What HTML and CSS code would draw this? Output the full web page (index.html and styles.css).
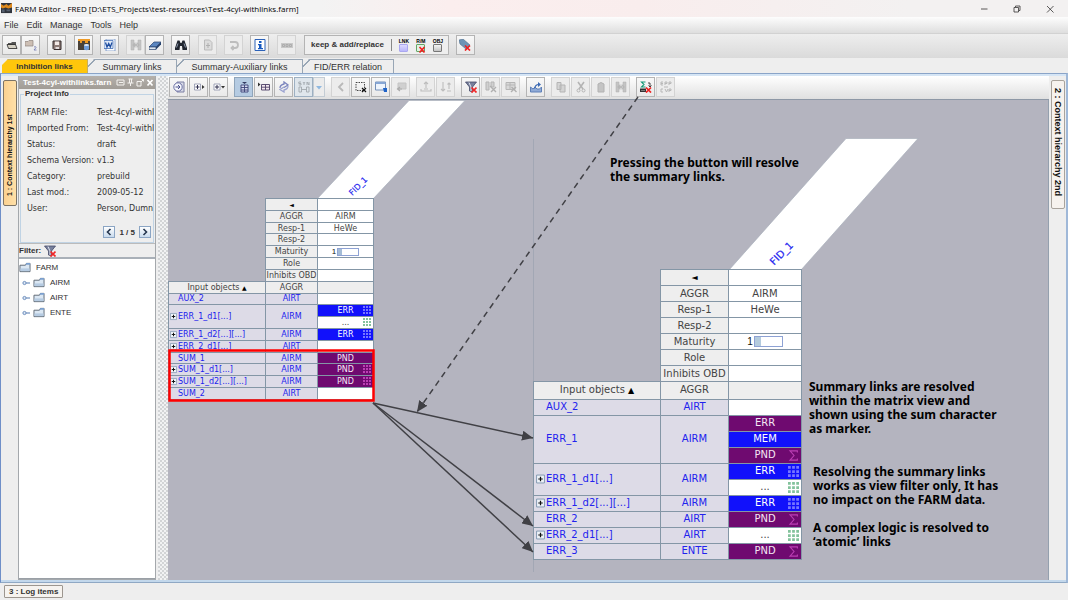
FILE: index.html
```html
<!DOCTYPE html>
<html lang="en">
<head>
<meta charset="utf-8">
<title>FARM Editor - FRED</title>
<link rel="stylesheet" href="styles.css">
</head>
<body>
<svg class="defs" aria-hidden="true">
  <symbol id="i-open" viewBox="0 0 12 12"><path d="M2 4h3l1-1h4v6H2z" fill="#555"/><path d="M3 6h7l-1 3H2z" fill="#e8e4d8"/><path d="M1 5.5h8.500l1.500 4H2.500z" fill="#d6d2c6" stroke="#222" stroke-width=".8"/></symbol>
  <symbol id="i-open2" viewBox="0 0 12 12"><path d="M0 2.500h3l1-1h4V7H0z" fill="#cdbfb4" stroke="#8f8580" stroke-width=".7"/><path d="M9 8q2-1 2 .6L9 11h2.500" fill="none" stroke="#6c74b0" stroke-width=".8"/></symbol>
  <symbol id="i-save" viewBox="0 0 12 12"><path d="M2 2h8v8.500H3L2 9.500z" fill="#8d7b76" stroke="#352c2c"/><path d="M4 2.500h4V6H4z" fill="#f2e9e6"/><path d="M4.500 8h3.500v2H4.500z" fill="#e3dcdc"/></symbol>
  <symbol id="i-farm" viewBox="0 0 12 12"><path d="M0 0h12v11H0z" fill="#30343c"/><path d="M0 1l3 2 3-2 2 2 4-3v5l-4 1-3-1-3 1-2-1z" fill="#e08a1c"/><path d="M1 7h3v3H1zM6 7h4v2H6z" fill="#566070"/></symbol>
  <symbol id="i-db" viewBox="0 0 12 12"><path d="M0 0h12v6H0z" fill="#ee9a25"/><path d="M0 2h2v2h2V2h3v2h3V2h2v9H0z" fill="#4a4238"/><path d="M6 6h5v4.500q-2.500 1.500-5 0z" fill="#6f9cd8"/><ellipse cx="8.500" cy="6" rx="2.500" ry="1" fill="#dce9fa"/></symbol>
  <symbol id="i-word" viewBox="0 0 12 12"><path d="M2 0h9v12H2z" fill="#fff" stroke="#6f8fc4" stroke-width=".8"/><path d="M0 1.500h9v8H0z" fill="#dfe9f8" stroke="#2f5fae" stroke-width=".7"/><path d="M1.500 3.500L3 8l1.700-3.500L6.300 8 8 3.500" fill="none" stroke="#1f4ea0" stroke-width="1.300"/></symbol>
  <symbol id="i-merge" viewBox="0 0 12 12"><path d="M1 1h3v10H1zM8 1h3v10H8zM3 5h6v2H3zM5 3.500v5L3.500 6zM7 3.500v5L8.500 6z" fill="#c4c4c4" stroke="#b2b2b2" stroke-width=".5"/></symbol>
  <symbol id="i-eraser" viewBox="0 0 12 12"><path d="M0 8l5-5h7L7 8z" fill="#5b86c0" stroke="#27416b" stroke-width=".7"/><path d="M0 8h7v2.500H0z" fill="#dfe8f2" stroke="#27416b" stroke-width=".7"/><path d="M7 8l5-5v2.500l-5 5z" fill="#26426e"/></symbol>
  <symbol id="i-find" viewBox="0 0 12 12"><path d="M2.500 1.500h2L5.500 4h1l1-2.500h2L12 9v2H7.500L7 7H5l-.5 4H0V9z" fill="#20252f"/><path d="M1.500 8.500l1.500-4M9 4.500l1.500 4" stroke="#aab6cc" stroke-width=".8"/></symbol>
  <symbol id="i-doc" viewBox="0 0 12 12"><path d="M2.500 1h5l2.500 2.500V11H2.500z" fill="#dcdcdc" stroke="#bbb"/><path d="M6 4v5M4 6.500h4" stroke="#b0b0b0"/></symbol>
  <symbol id="i-redo" viewBox="0 0 12 12"><path d="M2 3h5q3 0 3 3t-3 3H5M5.500 7L3.500 9l2 2" fill="none" stroke="#bdbdbd" stroke-width="1.800"/></symbol>
  <symbol id="i-info" viewBox="0 0 12 12"><path d="M1 .5h10v11H1z" fill="#fff" stroke="#2c62b8"/><path d="M5 2h2.500v2H5zM4 5h3.500v4H9v1.300H4V9h1V6.300H4z" fill="#1558c0"/></symbol>
  <symbol id="i-obd" viewBox="0 0 12 12"><path d="M0 4h12v5H0z" fill="#c8c8c8"/><path d="M1.500 5.500h2v2h-2zM5 5.500h2v2H5zM8.500 5.500h2v2h-2z" fill="none" stroke="#a6a6a6" stroke-width=".8"/></symbol>
  <symbol id="i-tagx" viewBox="0 0 12 12"><path d="M0 1l4-1 7 6-4 4L1 5z" fill="#6d93b5" stroke="#4d6d8c" stroke-width=".6"/><path d="M6 6.500l5 5M11 6.500l-5 5" stroke="#f02020" stroke-width="1.700"/></symbol>
  <symbol id="i-hist" viewBox="0 0 12 12"><path d="M4 1h7v10H4z" fill="#d7dae6" stroke="#7d80a4"/><circle cx="5" cy="6" r="4.200" fill="#f6f7fc" stroke="#6a6fa4"/><path d="M2.500 6h4.500M5 4l2 2-2 2" fill="none" stroke="#4a508c"/></symbol>
  <symbol id="i-plusr" viewBox="0 0 12 12"><path d="M1.500 3h6v6h-6z" fill="#fff" stroke="#8b90a8" stroke-width=".8"/><path d="M4.500 4v4M2.500 6h4" stroke="#303050"/><path d="M9 4l2.500 2L9 8z" fill="#333"/></symbol>
  <symbol id="i-plusd" viewBox="0 0 12 12"><path d="M1 3h6v6H1z" fill="#fff" stroke="#8b90a8" stroke-width=".8"/><path d="M4 4v4M2 6h4" stroke="#303050"/><path d="M8 5h4l-2 2.500z" fill="#333"/></symbol>
  <symbol id="i-cols" viewBox="0 0 12 12"><path d="M3 4h7v7H3zM3 6.500h7M3 9h7M6.500 4v7" fill="#d4d8ee" stroke="#3c4476" stroke-width=".9"/><path d="M4 1h5L6.500 3z" fill="#333a60"/></symbol>
  <symbol id="i-rows" viewBox="0 0 12 12"><path d="M3.500 3.500h8v5.500h-8zM3.500 6.200h8M7.500 3.500V9" fill="#f4e9f0" stroke="#4c3f66" stroke-width=".9"/><path d="M0 1.500l2.500 2L0 5.500z" fill="#333"/></symbol>
  <symbol id="i-sync" viewBox="0 0 12 12"><path d="M2 7q0-3 4-4V1l4 3-4 2.500" fill="none" stroke="#7b84bd" stroke-width="1.300"/><path d="M10 5q0 3-4 4v2L2 8.500 6 6" fill="none" stroke="#9aa2d0" stroke-width="1.300"/></symbol>
  <symbol id="i-syn" viewBox="0 0 12 12"><path d="M3 1H.8v1.500H3V4H.8M5 1l1 1.500L7 1M6 2.500V4M9 4V1l2 3V1M1 6h2.500v5H1zM8.500 6H11v5H8.500zM3.500 8.500h5" fill="none" stroke="#a2a8ae" stroke-width=".9"/></symbol>
  <symbol id="i-left" viewBox="0 0 12 12"><path d="M8 2L4 6l4 4" fill="none" stroke="#b8b8b8" stroke-width="1.800"/></symbol>
  <symbol id="i-selx" viewBox="0 0 12 12"><path d="M1 1.500h8.500v8H1z" fill="none" stroke="#333" stroke-width=".9" stroke-dasharray="1.500 1"/><path d="M7 7l4 4M11 7l-4 4" stroke="#111" stroke-width="1.200"/></symbol>
  <symbol id="i-win" viewBox="0 0 12 12"><path d="M.5 1h10v8H.5z" fill="#eef4fc" stroke="#7590b8"/><path d="M.5 1h10v2H.5z" fill="#87a6d4"/><path d="M8 7h4v4H9z" fill="#1f63c8"/></symbol>
  <symbol id="i-back" viewBox="0 0 12 12"><path d="M3 2h8v6H3z" fill="#d0d0d0" stroke="#c4c4c4"/><path d="M7 8H3M5 6L2.500 8 5 10" fill="none" stroke="#ababab" stroke-width="1.200"/></symbol>
  <symbol id="i-anchor" viewBox="0 0 12 12"><path d="M6 1v6M4 3l2-2 2 2M1 8v2h10V8M4 8h4" fill="none" stroke="#bdbdbd" stroke-width="1.100"/></symbol>
  <symbol id="i-swap" viewBox="0 0 12 12"><path d="M3 1v9M1 8l2 2 2-2M7 10h4M9 8V2M7.500 3.500L9 2l1.500 1.500" fill="none" stroke="#bdbdbd" stroke-width="1.100"/></symbol>
  <symbol id="i-funnelx" viewBox="0 0 12 12"><path d="M.5 1h11L7.500 6v5l-3-1V6z" fill="#77809c" stroke="#454a68" stroke-width=".8"/><path d="M4 1.500L6 6v4" stroke="#dfe3ee" fill="none"/><path d="M6.500 6.500l5 5M11.500 6.500l-5 5" stroke="#f02828" stroke-width="1.700"/></symbol>
  <symbol id="i-mergex" viewBox="0 0 12 12"><path d="M1 1h3v8H1zM6 1h3v5H6z" fill="#d0d0d0" stroke="#b4b4b4"/><path d="M5 5l6 6M11 6l-5 5" stroke="#b0b0b0" stroke-width="1.400"/></symbol>
  <symbol id="i-tabx" viewBox="0 0 12 12"><path d="M1 1.500h9v7H1zM1 4h9M5 1.500v7" fill="#d8d8d8" stroke="#b6b6b6"/><path d="M6.500 6l5 5M11 6l-5 5" stroke="#b0b0b0" stroke-width="1.400"/></symbol>
  <symbol id="i-export" viewBox="0 0 12 12"><path d="M.5 6v5h11V6l-2 2H7L5 6 3 8z" fill="#8faad6" stroke="#5f80b8"/><path d="M4.500 7.500q1-4 4-4" fill="none" stroke="#3b69b4" stroke-width="1.200"/><path d="M8 1l3 2.500L8 6z" fill="#3b69b4"/></symbol>
  <symbol id="i-copy" viewBox="0 0 12 12"><path d="M2 1.500h4v7H2zM5 4h5v7H5z" fill="#d4d4d4" stroke="#b4b4b4"/></symbol>
  <symbol id="i-cut" viewBox="0 0 12 12"><path d="M3 1l5 7M9 1L4 8" stroke="#b4b4b4" stroke-width="1.600"/><circle cx="3.500" cy="9.500" r="1.500" fill="none" stroke="#b4b4b4"/><circle cx="8.500" cy="9.500" r="1.500" fill="none" stroke="#b4b4b4"/></symbol>
  <symbol id="i-paste" viewBox="0 0 12 12"><path d="M3 3q3-3 6 0v8H3z" fill="#c4c4c4" stroke="#b2b2b2"/></symbol>
  <symbol id="i-resolve" viewBox="0 0 12 12"><path d="M5.500 1H1.500L4 3.500 1.500 6h4" fill="none" stroke="#159a78" stroke-width="1.100"/><path d="M8 2h2v4M8.500 4.500L10 6l1.500-1.500" fill="none" stroke="#333" stroke-width=".9"/><path d="M0 7.500h6V11H0z" fill="#333"/><path d="M1 9.500h4" stroke="#aaa" stroke-width=".6"/><path d="M6 6.500l5 5M11 6.500l-5 5" stroke="#f02020" stroke-width="1.700"/></symbol>
  <symbol id="i-errerr" viewBox="0 0 12 12"><path d="M3 1H1v3h2M1 2.500h2M5 4V1h2v1.500H5M9 4V1h2v1.500H9M4 6h4M3 8H1v3h2M5 8l1.500 3L8 8M9 11V8h2v1.500H9" fill="none" stroke="#b8b8b8" stroke-width="1"/></symbol>
  <symbol id="i-folder" viewBox="0 0 12 12"><path d="M.5 3.500h6l1-2h4v9H.5z" fill="#dbe7f3" stroke="#59636e"/><path d="M7.500 1h4v2h-5z" fill="#7ba0cf"/><path d="M1 7h10v3H1z" fill="#b6cbe2"/></symbol>
  <symbol id="i-knob" viewBox="0 0 8 8"><circle cx="2.500" cy="4" r="1.600" fill="#dbe6f4" stroke="#6f8fbd"/><path d="M4 4h4" stroke="#6f8fbd" stroke-width="1.200"/></symbol>
  <symbol id="i-grid" viewBox="0 0 8 8"><path d="M0 0h2v2H0zM3 0h2v2H3zM6 0h2v2H6zM0 3h2v2H0zM3 3h2v2H3zM6 3h2v2H6zM0 6h2v2H0zM3 6h2v2H3zM6 6h2v2H6z" fill="currentColor"/></symbol>
  <symbol id="i-sum" viewBox="0 0 10 10"><path d="M8.500 2.200V.8H1.800L5.500 5 1.800 9.200h6.700V7.800" fill="none" stroke="currentColor" stroke-width="1"/></symbol>
  <symbol id="i-plus" viewBox="0 0 8 8"><path d="M.5.500h7v7h-7z" fill="#eef3f8" stroke="#7c93ad" stroke-width=".8"/><path d="M4 2v4M2 4h4" stroke="#111" stroke-width="1.100"/></symbol>
</svg>
<div class="app">
  <header class="titlebar">
    <svg class="logo"><use href="#i-farm"/></svg>
    <h1 class="title">FARM Editor - FRED [D:\ETS_Projects\test-resources\Test-4cyl-withlinks.farm]</h1>
    <button class="win" aria-label="Minimize"><svg viewBox="0 0 8 8"><path d="M1 4h6.500" stroke="#333" stroke-width=".8"/></svg></button>
    <button class="win" aria-label="Restore"><svg viewBox="0 0 8 8"><path d="M1 2.500h4.500V7H1zM2.500 2V1H7v4.500H6" fill="none" stroke="#333" stroke-width=".8"/></svg></button>
    <button class="win" aria-label="Close"><svg viewBox="0 0 8 8"><path d="M1 1l6.500 6.500M7.500 1L1 7.500" stroke="#333" stroke-width=".8"/></svg></button>
  </header>
  <nav class="menubar">
    <button>File</button><button>Edit</button><button>Manage</button><button>Tools</button><button>Help</button>
  </nav>
  <div class="toolbar">
    <div class="section">
      <div class="pair"><button class="tool" aria-label="Open"><svg><use href="#i-open"/></svg></button><button class="tool" aria-label="Open second"><svg><use href="#i-open2"/></svg></button></div>
      <button class="tool" aria-label="Save"><svg><use href="#i-save"/></svg></button>
    </div>
    <div class="section">
      <button class="tool" aria-label="Database"><svg><use href="#i-db"/></svg></button>
      <button class="tool" aria-label="Word export"><svg><use href="#i-word"/></svg></button>
      <div class="pair"><button class="tool off" aria-label="Compare"><svg><use href="#i-merge"/></svg></button><button class="tool" aria-label="Erase"><svg><use href="#i-eraser"/></svg></button></div>
      <button class="tool" aria-label="Find"><svg><use href="#i-find"/></svg></button>
    </div>
    <div class="section">
      <button class="tool off" aria-label="New page"><svg><use href="#i-doc"/></svg></button>
      <button class="tool off" aria-label="Redo"><svg><use href="#i-redo"/></svg></button>
      <button class="tool" aria-label="Info"><svg><use href="#i-info"/></svg></button>
    </div>
    <div class="section"><button class="tool off" aria-label="OBD"><svg><use href="#i-obd"/></svg></button></div>
    <div class="section">
      <div class="keep">
        <button class="keep-label">keep &amp; add/replace</button>
        <button class="mode" aria-label="Link mode"><span class="mode-text">LNK</span><span class="box lnk"></span></button>
        <button class="mode" aria-label="R/M mode"><span class="mode-text">R/M</span><span class="box rm"><svg viewBox="0 0 8 8"><path d="M2.500 2l5 5.500M7.500 2l-5 5.500" stroke="#f02020" stroke-width="1.600"/></svg></span></button>
        <button class="mode" aria-label="Object mode"><span class="mode-text">OBJ</span><span class="box obj"></span></button>
      </div>
      <button class="tool" aria-label="Remove tag"><svg><use href="#i-tagx"/></svg></button>
    </div>
  </div>
  <nav class="tabs">
    <button class="tab t1 active">Inhibition links</button><button class="tab t2">Summary links</button><button class="tab t3">Summary-Auxiliary links</button><button class="tab t4">FID/ERR relation</button>
  </nav>
  <main class="work">
    <aside class="rail left"><button class="dock up">1 : Context hierarchy 1st</button></aside>
    <section class="panel">
      <div class="panel-head">
        <h2>Test-4cyl-withlinks.farn</h2>
        <svg class="panel-icons" viewBox="0 0 38 9"><path d="M1 2h7v5H1zM3 4.500h4M12.500 1h4M13.500 1v4M15.500 1v4M11.500 5h6M14.500 5v3M21 3.500h4V8h-4zM25 4l2.500-2.500M25.500 1.500h2v2" fill="none" stroke="#f4f2ef"/><path d="M31.500 2l5 5.500M36.500 2l-5 5.500" stroke="#fff" stroke-width="1.700"/></svg>
      </div>
      <fieldset class="info">
        <legend>Project Info</legend>
        <dl>
          <dt>FARM File:</dt><dd>Test-4cyl-withl</dd>
          <dt>Imported From:</dt><dd>Test-4cyl-withl</dd>
          <dt>Status:</dt><dd>draft</dd>
          <dt>Schema Version:</dt><dd>v1.3</dd>
          <dt>Category:</dt><dd>prebuild</dd>
          <dt>Last mod.:</dt><dd>2009-05-12</dd>
          <dt>User:</dt><dd>Person, Dumn</dd>
        </dl>
        <div class="pager">
          <button aria-label="Previous"><svg viewBox="0 0 8 8"><path d="M5.500 1L2.500 4l3 3" fill="none" stroke="#26364e" stroke-width="1.600"/></svg></button>
          <span>1 / 5</span>
          <button aria-label="Next"><svg viewBox="0 0 8 8"><path d="M2.500 1l3 3-3 3" fill="none" stroke="#26364e" stroke-width="1.600"/></svg></button>
        </div>
      </fieldset>
      <div class="filter"><span>Filter:</span><button aria-label="Clear filter"><svg><use href="#i-funnelx"/></svg></button></div>
      <ul class="tree">
        <li><svg class="folder"><use href="#i-folder"/></svg>FARM
          <ul>
            <li><svg class="knob"><use href="#i-knob"/></svg><svg class="folder"><use href="#i-folder"/></svg>AIRM</li>
            <li><svg class="knob"><use href="#i-knob"/></svg><svg class="folder"><use href="#i-folder"/></svg>AIRT</li>
            <li><svg class="knob"><use href="#i-knob"/></svg><svg class="folder"><use href="#i-folder"/></svg>ENTE</li>
          </ul>
        </li>
      </ul>
    </section>
    <div class="splitter"></div>
    <section class="editor">
      <div class="subbar">
        <div class="group"><button class="tool" aria-label="History"><svg><use href="#i-hist"/></svg></button><button class="tool" aria-label="Expand right"><svg><use href="#i-plusr"/></svg></button><button class="tool" aria-label="Expand down"><svg><use href="#i-plusd"/></svg></button></div>
        <div class="group"><button class="tool on" aria-label="Columns"><svg><use href="#i-cols"/></svg></button><button class="tool" aria-label="Rows"><svg><use href="#i-rows"/></svg></button><button class="tool" aria-label="Refresh"><svg><use href="#i-sync"/></svg></button><div class="pair"><button class="tool syn" aria-label="Synchronize"><svg><use href="#i-syn"/></svg></button><button class="drop" aria-label="Synchronize options"><svg viewBox="0 0 8 8"><path d="M1 3h6L4 6.500z" fill="#8fb8e0"/></svg></button></div></div>
        <div class="group"><button class="tool off" aria-label="Back"><svg><use href="#i-left"/></svg></button><button class="tool" aria-label="Clear selection"><svg><use href="#i-selx"/></svg></button><button class="tool" aria-label="Window"><svg><use href="#i-win"/></svg></button><button class="tool off" aria-label="Return"><svg><use href="#i-back"/></svg></button></div>
        <div class="group"><button class="tool off" aria-label="Anchor"><svg><use href="#i-anchor"/></svg></button><button class="tool off" aria-label="Swap"><svg><use href="#i-swap"/></svg></button></div>
        <div class="group"><button class="tool" aria-label="Remove filter"><svg><use href="#i-funnelx"/></svg></button><button class="tool off" aria-label="Remove merge"><svg><use href="#i-mergex"/></svg></button><button class="tool off" aria-label="Remove table"><svg><use href="#i-tabx"/></svg></button></div>
        <div class="group"><button class="tool" aria-label="Export"><svg><use href="#i-export"/></svg></button></div>
        <div class="group"><button class="tool off" aria-label="Copy"><svg><use href="#i-copy"/></svg></button><button class="tool off" aria-label="Cut"><svg><use href="#i-cut"/></svg></button><button class="tool off" aria-label="Paste"><svg><use href="#i-paste"/></svg></button><button class="tool off" aria-label="Merge"><svg><use href="#i-merge"/></svg></button></div>
        <div class="group"><button class="tool" aria-label="Resolve summary links"><svg><use href="#i-resolve"/></svg></button><button class="tool off" aria-label="Error links"><svg><use href="#i-errerr"/></svg></button></div>
      </div>
      <div class="canvas">
        <svg class="layer shapes" viewBox="168 100 880 480">
          <path d="M533.500 139v433" stroke="#a2a7b4"/>
          <path d="M317 199L409 100.500h56L373 199z" fill="#fff" stroke="#a9b0bb" stroke-width=".7"/>
          <path d="M729 270L846 138.500h72L801 270z" fill="#fff" stroke="#a9b0bb" stroke-width=".7"/>
          <text class="fid" font-size="8" transform="translate(358 186) rotate(-45)" text-anchor="middle" y="3">FID_1</text>
          <text class="fid" font-size="10" transform="translate(781 253) rotate(-45)" text-anchor="middle" y="4">FID_1</text>
        </svg>
        <table class="matrix before">
          <colgroup><col class="c1"><col class="c2"><col class="c3"></colgroup>
          <tbody class="head">
            <tr><td rowspan="7" class="void"></td><th class="arrow">◄</th><td></td></tr>
            <tr><th>AGGR</th><td>AIRM</td></tr>
            <tr><th>Resp-1</th><td>HeWe</td></tr>
            <tr><th>Resp-2</th><td></td></tr>
            <tr><th>Maturity</th><td><span class="maturity">1<span class="bar"></span></span></td></tr>
            <tr><th>Role</th><td></td></tr>
            <tr><th>Inhibits OBD</th><td></td></tr>
            <tr><th>Input objects <span class="arrow">▲</span></th><th>AGGR</th><th></th></tr>
          </tbody>
          <tbody class="rows">
            <tr><td class="name">AUX_2</td><td class="aggr">AIRT</td><td class="val"></td></tr>
            <tr><td class="name" rowspan="2"><button aria-label="Expand"><svg><use href="#i-plus"/></svg></button>ERR_1_d1[...]</td><td class="aggr" rowspan="2">AIRM</td><td class="val blue dots">ERR<svg><use href="#i-grid"/></svg></td></tr>
            <tr><td class="val more">...<svg><use href="#i-grid"/></svg></td></tr>
            <tr><td class="name"><button aria-label="Expand"><svg><use href="#i-plus"/></svg></button>ERR_1_d2[...][...]</td><td class="aggr">AIRM</td><td class="val blue">ERR<svg><use href="#i-grid"/></svg></td></tr>
            <tr><td class="name"><button aria-label="Expand"><svg><use href="#i-plus"/></svg></button>ERR_2_d1[...]</td><td class="aggr">AIRT</td><td class="val"></td></tr>
            <tr><td class="name">SUM_1</td><td class="aggr">AIRM</td><td class="val plum">PND</td></tr>
            <tr><td class="name"><button aria-label="Expand"><svg><use href="#i-plus"/></svg></button>SUM_1_d1[...]</td><td class="aggr">AIRM</td><td class="val plum">PND<svg><use href="#i-grid"/></svg></td></tr>
            <tr><td class="name"><button aria-label="Expand"><svg><use href="#i-plus"/></svg></button>SUM_1_d2[...][...]</td><td class="aggr">AIRM</td><td class="val plum">PND<svg><use href="#i-grid"/></svg></td></tr>
            <tr><td class="name">SUM_2</td><td class="aggr">AIRT</td><td class="val"></td></tr>
          </tbody>
        </table>
        <table class="matrix after">
          <colgroup><col class="c1"><col class="c2"><col class="c3"></colgroup>
          <tbody class="head">
            <tr><td rowspan="7" class="void"></td><th class="arrow">◄</th><td></td></tr>
            <tr><th>AGGR</th><td>AIRM</td></tr>
            <tr><th>Resp-1</th><td>HeWe</td></tr>
            <tr><th>Resp-2</th><td></td></tr>
            <tr><th>Maturity</th><td><span class="maturity">1<span class="bar"></span></span></td></tr>
            <tr><th>Role</th><td></td></tr>
            <tr><th>Inhibits OBD</th><td></td></tr>
            <tr><th>Input objects <span class="arrow">▲</span></th><th>AGGR</th><th></th></tr>
          </tbody>
          <tbody class="rows">
            <tr><td class="name">AUX_2</td><td class="aggr">AIRT</td><td class="val"></td></tr>
            <tr><td class="name" rowspan="3">ERR_1</td><td class="aggr" rowspan="3">AIRM</td><td class="val plum dots">ERR</td></tr>
            <tr><td class="val blue dots">MEM</td></tr>
            <tr><td class="val plum">PND<svg><use href="#i-sum"/></svg></td></tr>
            <tr><td class="name" rowspan="2"><button aria-label="Expand"><svg><use href="#i-plus"/></svg></button>ERR_1_d1[...]</td><td class="aggr" rowspan="2">AIRM</td><td class="val blue dots">ERR<svg><use href="#i-grid"/></svg></td></tr>
            <tr><td class="val more">...<svg><use href="#i-grid"/></svg></td></tr>
            <tr><td class="name"><button aria-label="Expand"><svg><use href="#i-plus"/></svg></button>ERR_1_d2[...][...]</td><td class="aggr">AIRM</td><td class="val blue">ERR<svg><use href="#i-grid"/></svg></td></tr>
            <tr><td class="name">ERR_2</td><td class="aggr">AIRT</td><td class="val plum">PND<svg><use href="#i-sum"/></svg></td></tr>
            <tr><td class="name"><button aria-label="Expand"><svg><use href="#i-plus"/></svg></button>ERR_2_d1[...]</td><td class="aggr">AIRT</td><td class="val more">...<svg><use href="#i-grid"/></svg></td></tr>
            <tr><td class="name">ERR_3</td><td class="aggr">ENTE</td><td class="val plum">PND<svg><use href="#i-sum"/></svg></td></tr>
          </tbody>
        </table>
        <p class="note n1">Pressing the button will resolve<br>the summary links.</p>
        <p class="note n2">Summary links are resolved<br>within the matrix view and<br>shown using the sum character<br>as marker.</p>
        <div class="note n3"><p>Resolving the summary links<br>works as view filter only, It has<br>no impact on the FARM data.</p><p>A complex logic is resolved to<br>‘atomic’ links</p></div>
        <svg class="layer" viewBox="168 100 880 480">
          <defs><marker id="head" viewBox="0 0 11 10" refX="11" refY="5" markerWidth="11" markerHeight="10" markerUnits="userSpaceOnUse" orient="auto"><path d="M0 0l11 5-11 5z" fill="#404045"/></marker></defs>
          <rect x="169.500" y="350.500" width="204" height="50" fill="none" stroke="#f00" stroke-width="2.500"/>
          <g fill="none" stroke="#404045" stroke-width="1.500">
            <path d="M373 403L533 438" marker-end="url(#head)"/>
            <path d="M373 403L533 526" marker-end="url(#head)"/>
            <path d="M373 403L533 552" marker-end="url(#head)"/>
            <path d="M638 97L417 412" stroke-dasharray="6 4.500" marker-end="url(#head)"/>
          </g>
        </svg>
      </div>
    </section>
    <aside class="rail right"><button class="dock down">2 : Context hierarchy 2nd</button></aside>
  </main>
  <footer class="status"><button>3 : Log items</button></footer>
</div>
</body>
</html>
```
FILE: styles.css
```css
* { box-sizing: border-box; }
body { margin: 0; font-family: "Liberation Sans", Arial, sans-serif; font-size: 9px; color: #333; background: #eee; }
button { margin: 0; padding: 0; border: 0; background: none; font: inherit; color: inherit; }
h1, h2, p, dl, dd, ul { margin: 0; padding: 0; }
svg { display: block; flex: none; }
.defs { width: 0; height: 0; position: absolute; }
.app { display: flex; flex-direction: column; height: 100vh; min-height: 600px; overflow: hidden; }

.titlebar { display: flex; align-items: center; height: 17px; padding: 0 10px 0 1px; gap: 3px; background: linear-gradient(90deg, #f3f3f3 30%, #fbeeee 42%, #f9eded 60%, #f3f1f1 85%); }
.logo { width: 11px; height: 11px; }
.title { flex: 1; font: 400 8px "Open Sans", sans-serif; color: #000; white-space: nowrap; }
.win { width: 16px; margin-left: 14px; display: flex; justify-content: center; }
.win svg { width: 8px; height: 8px; }

.menubar { display: flex; align-items: center; gap: 8px; height: 17px; padding: 0 4px; background: linear-gradient(#fdfdfd, #dedede); border-bottom: 1px solid #d2d2d2; }

.toolbar { display: flex; align-items: center; gap: 8px; height: 24px; padding: 0 2px 2px; background: linear-gradient(#eee, #dadada); }
.section { display: flex; gap: 7px; }
.pair { display: flex; }
.tool { display: flex; align-items: center; justify-content: center; width: 19px; height: 20px; border: 1px solid #b4b4b4; background: linear-gradient(#f8f8f8, #e9e9e9); }
.tool svg { width: 12px; height: 12px; }
.tool.off { border-color: #d3d3d3; background: #ececec; }
.tool.on { background: #b5cbe2; border-color: #8fa5bb; }
.keep { display: flex; align-items: center; height: 20px; padding: 0 5px 0 6px; gap: 7px; border: 1px solid #b4b4b4; background: #efefef; }
.keep-label { padding-right: 7px; border-right: 1px solid #888; font-size: 8px; line-height: 12px; font-weight: 700; }
.mode { display: flex; flex-direction: column; align-items: center; width: 10px; }
.mode-text { font-size: 5px; line-height: 5px; font-weight: 700; color: #000; }
.box { width: 9px; height: 8px; border: 1px solid #aaa7f0; border-radius: 1px; background: linear-gradient(#dcdaff, #b9b6fb); }
.box.rm { border-color: #66a866; background: #e3f0e3; }
.box.rm svg { width: 8px; height: 8px; }
.box.obj { border-color: #777; background: linear-gradient(#f5f5f5, #c4c4c4); }

.tabs { display: flex; height: 15px; padding: 1px 2px 0; }
.tab { height: 14px; border-top: 1px solid #98a6b5; border-right: 1px solid #98a6b5; background: linear-gradient(135deg, #eee 4px, #98a6b5 4px 5px, #eee 5px); clip-path: polygon(0 6px, 6px 0, 100% 0, 100% 100%, 0 100%); }
.tab.active { font-size: 8px; font-weight: 700; background: #ffc60b; border-color: #c9b060; }
.t1 { width: 86px; }
.t2 { width: 89px; }
.t3 { width: 126px; }
.t4 { width: 91px; }

.work { flex: 1; min-height: 0; display: flex; border: 1px solid #8aa4c8; border-width: 1px 2px 1px 1px; border-color: #8aa4c8 #9fb8d8 #8fa8c4 #6f8fc8; box-shadow: inset 0 2px #d5e5f5, inset 0 -2px #c3d8ec; padding: 2px 0; }
.rail { display: flex; flex-direction: column; padding-top: 4px; }
.rail.left { width: 17px; padding-left: 2px; }
.rail.right { width: 17px; padding-left: 2px; background: #eee; }
.dock { width: 14px; height: 126px; border: 1px solid #7d7466; border-radius: 2px; writing-mode: vertical-rl; font-weight: 700; color: #111; white-space: nowrap; text-align: left; }
.dock.up { transform: rotate(180deg); background: linear-gradient(90deg, #ffe0a8, #fbd190); font-size: 7px; line-height: 12px; padding-top: 9px; }
.dock.down { height: 129px; background: #f6f2ee; border-color: #a9a39c; font-size: 9px; line-height: 12px; padding-top: 7px; }

.panel { display: flex; flex-direction: column; width: 138px; border: 1px solid #a4a8ac; border-top: 0; min-height: 0; }
.panel-head { display: flex; align-items: center; height: 13px; padding: 0 1px 0 4px; background: linear-gradient(#b5b1ac, #a19c96); color: #fff; }
.panel-head h2 { flex: 1; min-width: 0; font-size: 8px; line-height: 13px; white-space: nowrap; }
.panel-icons { width: 38px; height: 9px; }
.info { margin: 0 1px; padding: 5px 0 4px 6px; min-width: 0; border: 1px solid #c0d3e4; }
.info legend { margin-left: -3px; padding: 0 1px; font-size: 8px; line-height: 10px; font-weight: 700; }
.info dl { display: grid; grid-template-columns: 70px minmax(0, 1fr); grid-auto-rows: 16px; align-items: center; font: 8px "DejaVu Sans", sans-serif; white-space: nowrap; padding-bottom: 10px; }
.pager { display: flex; justify-content: flex-end; align-items: center; gap: 4px; padding-right: 2px; font-size: 8px; font-weight: 700; }
.pager button { display: flex; align-items: center; justify-content: center; width: 12px; height: 12px; border: 1px solid #8ba5c4; background: linear-gradient(#fff, #c9dbee); }
.pager svg { width: 8px; height: 8px; }
.filter { display: flex; align-items: center; gap: 3px; height: 16px; font-size: 8px; font-weight: 700; border-top: 1px solid #bbb; border-bottom: 2px solid #a9b0b8; }
.filter svg { width: 12px; height: 12px; }
.tree { flex: 1; padding-top: 1px; background: #fff; border-bottom: 1px solid #9aa0a6; list-style: none; font-size: 8px; line-height: 15px; }
.tree ul { list-style: none; margin-left: 3px; }
.tree svg { display: inline-block; vertical-align: middle; }
.folder { width: 12px; height: 11px; margin-right: 5px; }
.knob { width: 8px; height: 8px; margin-right: 3px; }
.splitter { width: 12px; border-left: 2px solid #eee; background: repeating-conic-gradient(#d2d4d6 0 25%, #f1f2f3 0 50%) 0 0 / 4px 4px; }

.editor { flex: 1; min-width: 0; display: flex; flex-direction: column; }
.subbar { position: relative; display: flex; align-items: center; gap: 6px; height: 24px; padding: 0 1px 2px; background: linear-gradient(#fff, #e0e0e0); border-bottom: 1px solid #8e98a6; }
.group { display: flex; gap: 1px; }
.tool.syn { background: #dfe6ec; border-color: #9db0c2; }
.drop { width: 12px; height: 20px; border: 1px solid #c3ccd4; background: #ececec; display: flex; align-items: center; justify-content: center; }
.drop svg { width: 8px; height: 8px; }

.canvas { position: relative; flex: 1; background: #b4b4bf; border-right: 1px solid #94a0ae; }
.layer { position: absolute; left: 0; top: 0; width: 880px; height: 480px; overflow: visible; pointer-events: none; }
.shapes { overflow: hidden; }
.fid { fill: #2424f0; stroke: #2424f0; stroke-width: 0.2; font-family: "DejaVu Sans", sans-serif; }
.matrix { position: absolute; border-collapse: collapse; table-layout: fixed; font-family: "DejaVu Sans", sans-serif; color: #444; }
.before { left: 0; top: 98px; width: 206px; height: 202px; font-size: 8px; line-height: 9px; }
.before .c1 { width: 97px; }
.before .c2 { width: 52px; }
.after { left: 365px; top: 169px; width: 269px; height: 291px; font-size: 10px; line-height: 12px; }
.after .c1 { width: 127px; }
.after .c2 { width: 68px; }
.matrix th, .matrix td { padding: 0; border: 1px solid #8496a6; text-align: center; font-weight: 400; white-space: nowrap; }
.matrix th { background: #eee; }
.matrix td { background: #fff; }
.matrix .void { background: none; border-top-color: transparent; border-left-color: transparent; }
.matrix .arrow { color: #000; font-size: 6px; }
.after .arrow { font-size: 8px; }
.maturity { display: inline-flex; align-items: center; font-family: "Liberation Sans", sans-serif; color: #111; vertical-align: top; }
.maturity .bar { width: 22px; height: 8px; margin-left: 1px; border: 1px solid #8ea2d4; background: linear-gradient(90deg, #a4bcd6 4px, #fff 4px); }
.after .bar { width: 29px; height: 11px; background: linear-gradient(90deg, #b4cbdd 6px, #fff 6px); }
.matrix .name { background: #dddbe7; color: #2222ee; text-align: left; padding-left: 9px; }
.matrix .aggr { background: #dddbe7; color: #2222ee; }
.after .name { padding-left: 12px; }
.name button { float: left; margin: 0 1px 0 -8px; }
.name svg { width: 7px; height: 9px; }
.after .name button { margin: 0 1px 0 -10px; }
.after .name svg { width: 9px; height: 12px; }
.matrix .val { position: relative; }
.val svg { position: absolute; right: 2px; top: 1px; width: 8px; height: 8px; }
.after .val svg { right: 2px; top: 2px; width: 11px; height: 11px; }
.matrix .blue { background: #1111fb; color: #fff; }
.matrix .blue svg { color: #7777ff; }
.matrix .plum { background: #6f0a70; color: #f4e6f4; }
.matrix .plum svg { color: #bb3fb4; }
.matrix .more svg { color: #83c29c; }
.matrix .dots { border-bottom: 1px dotted #dcdcff; }

.note { position: absolute; color: #000; font: 700 12px/14px "Noto Sans", sans-serif; white-space: nowrap; }
.note p + p { margin-top: 14px; }
.n1 { left: 442px; top: 56px; }
.n2 { left: 641px; top: 280px; }
.n3 { left: 645px; top: 365px; }

.status { display: flex; align-items: center; height: 17px; padding: 0 4px; }
.status button { height: 13px; padding: 0 4px; border: 1px solid #9c968f; border-radius: 1px; background: #f6f3ef; font-weight: 700; font-size: 8px; }
```
